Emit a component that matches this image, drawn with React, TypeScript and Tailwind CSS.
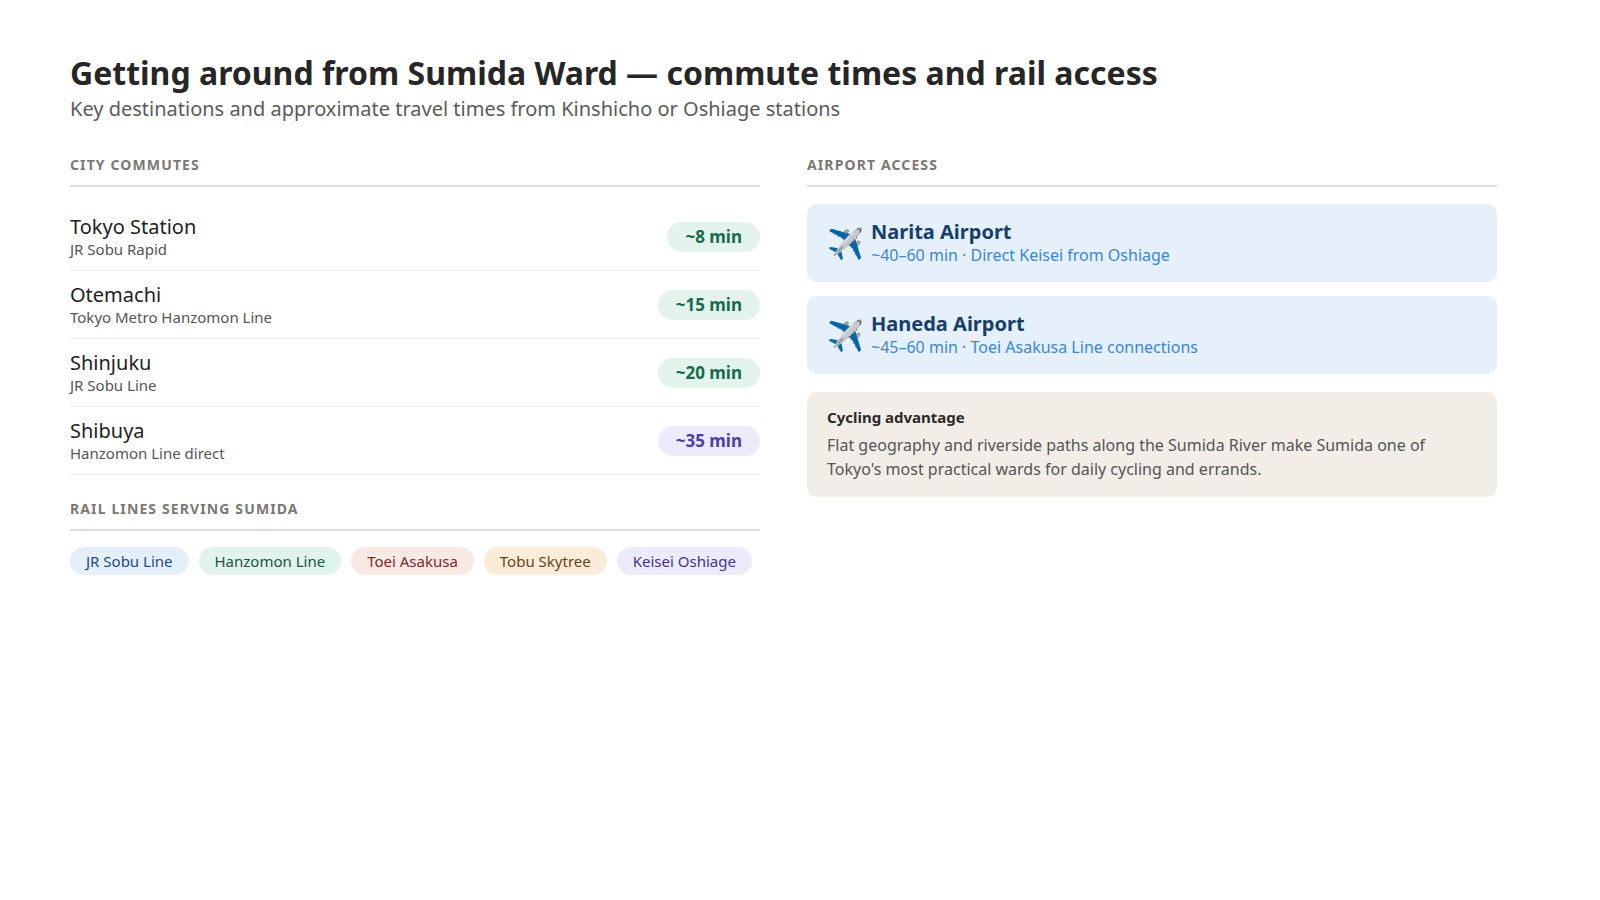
import React from 'react';

const commutes = [
  { name: 'Tokyo Station', line: 'JR Sobu Rapid', time: '~8 min', tone: 'bg-[#e3f4ec] text-[#146c4a]' },
  { name: 'Otemachi', line: 'Tokyo Metro Hanzomon Line', time: '~15 min', tone: 'bg-[#e3f4ec] text-[#146c4a]' },
  { name: 'Shinjuku', line: 'JR Sobu Line', time: '~20 min', tone: 'bg-[#e3f4ec] text-[#146c4a]' },
  { name: 'Shibuya', line: 'Hanzomon Line direct', time: '~35 min', tone: 'bg-[#ecebfb] text-[#4b3fae]' },
];

const lines = [
  { name: 'JR Sobu Line', tone: 'bg-[#e5effa] text-[#1d4a80]' },
  { name: 'Hanzomon Line', tone: 'bg-[#e1f3ec] text-[#17563f]' },
  { name: 'Toei Asakusa', tone: 'bg-[#f9e9e5] text-[#7a2b1c]' },
  { name: 'Tobu Skytree', tone: 'bg-[#f9ecd9] text-[#6a4314]' },
  { name: 'Keisei Oshiage', tone: 'bg-[#ecebfa] text-[#3f368f]' },
];

const airports = [
  { name: 'Narita Airport', info: '~40–60 min · Direct Keisei from Oshiage' },
  { name: 'Haneda Airport', info: '~45–60 min · Toei Asakusa Line connections' },
];

function Heading({ children }: { children: React.ReactNode }) {
  return (
    <div className="text-[14px] font-bold tracking-[0.08em] text-[#7b7873] pb-[10px] border-b-2 border-[#dcdcdc]">
      {children}
    </div>
  );
}

export default function App() {
  return (
    <div className="min-h-[900px] bg-white pl-[70px] pr-[103px] pt-[53px] text-[#222] font-['Liberation_Sans',Arial,sans-serif]">
      <h1 className="text-[32px] font-bold leading-[40px] text-[#262626]">
        Getting around from Sumida Ward — commute times and rail access
      </h1>
      <p className="text-[20px] text-[#5a5a5a] mt-[1px]">
        Key destinations and approximate travel times from Kinshicho or Oshiage stations
      </p>

      <div className="grid grid-cols-2 gap-[47px] mt-[30px]">
        <div>
          <Heading>CITY COMMUTES</Heading>
          <div className="mt-[16px]">
            {commutes.map((c) => (
              <div key={c.name} className="flex items-center justify-between h-[68px] border-b border-[#ececec]">
                <div>
                  <div className="text-[20px] leading-[24px] text-[#222]">{c.name}</div>
                  <div className="text-[15px] text-[#555] leading-[20px]">{c.line}</div>
                </div>
                <div className={`rounded-full px-[18px] h-[30px] flex items-center text-[17px] font-bold ${c.tone}`}>
                  {c.time}
                </div>
              </div>
            ))}
          </div>
          <div className="mt-[23px]">
            <Heading>RAIL LINES SERVING SUMIDA</Heading>
          </div>
          <div className="flex gap-[10px] mt-[16px]">
            {lines.map((l) => (
              <span key={l.name} className={`rounded-full px-[16px] h-[28px] flex items-center text-[15px] ${l.tone}`}>
                {l.name}
              </span>
            ))}
          </div>
        </div>

        <div>
          <Heading>AIRPORT ACCESS</Heading>
          <div className="flex flex-col gap-[14px] mt-[17px]">
            {airports.map((a) => (
              <div key={a.name} className="bg-[#e5f0fb] rounded-[10px] h-[78px] flex items-center px-[20px] gap-[16px]">
                <span className="text-[30px] leading-none text-black w-[28px]">✈</span>
                <div>
                  <div className="text-[20px] font-bold text-[#173f6e] leading-[24px]">{a.name}</div>
                  <div className="text-[16px] text-[#3a86d8] leading-[22px]">{a.info}</div>
                </div>
              </div>
            ))}
            <div className="bg-[#f2ede6] rounded-[10px] px-[20px] pt-[14px] pb-[16px] mt-[4px]">
              <div className="text-[15px] font-bold text-[#2a2a2a]">Cycling advantage</div>
              <p className="text-[16px] leading-[24px] text-[#555] mt-[4px]">
                Flat geography and riverside paths along the Sumida River make Sumida one of Tokyo's most practical wards for daily cycling and errands.
              </p>
            </div>
          </div>
        </div>
      </div>
    </div>
  );
}
